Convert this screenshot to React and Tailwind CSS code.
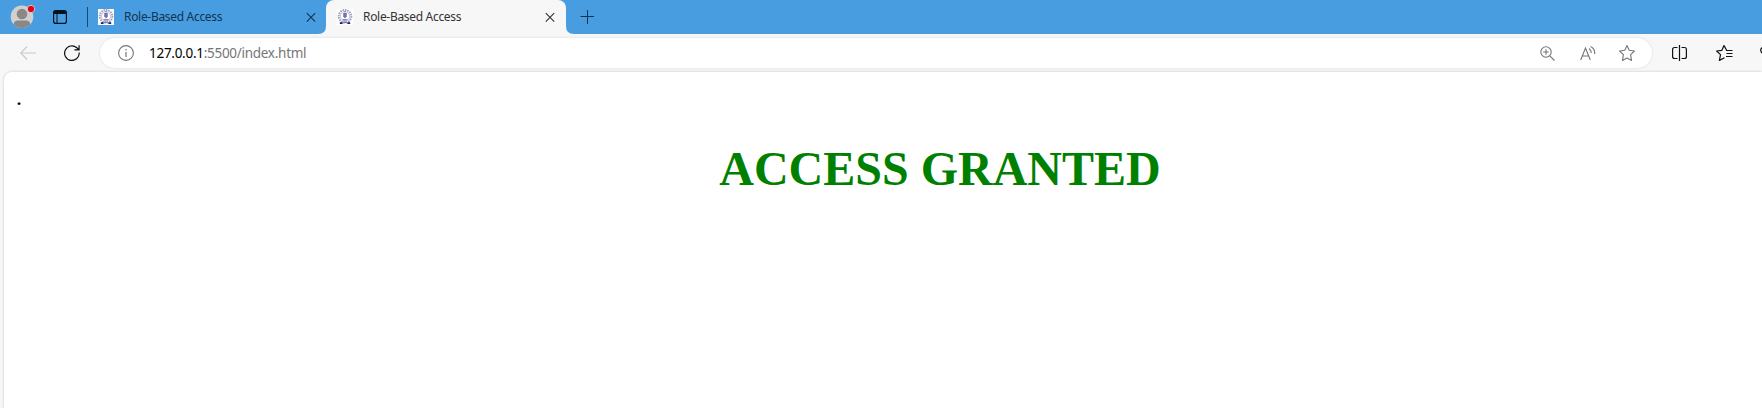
function Crest() {
  return (
    <svg width="16" height="16" viewBox="0 0 16 16" className="shrink-0" fill="none">
      <rect width="16" height="16" fill="#fff" />
      <circle cx="8" cy="7.3" r="6.3" stroke="#7878a8" strokeWidth="2" strokeDasharray="1.6 .8" opacity=".7" />
      <circle cx="8" cy="7.3" r="4.6" stroke="#b4b4cf" strokeWidth=".8" />
      <path d="M6.200 4h3.600v3.500L8 9.500 6.200 7.500Z" fill="#5c5c99" opacity=".85" />
      <path d="M7 2.800h2M5.500 10.500h5M6 12h4" stroke="#7070a8" strokeWidth=".8" />
      <path d="M2.800 13.300h2.800v1.700H2.800zM10.400 13.300h2.800v1.700h-2.800z" fill="#1c1c72" />
      <path d="M5.500 14q2.500-1.300 5 0" stroke="#8080b0" />
    </svg>
  )
}

function Close({ className }) {
  return (
    <svg width="10" height="10" viewBox="0 0 10 10" fill="none" className={className}>
      <path d="m.8 1.200 8.400 8.400m0-8.400L.8 9.600" stroke="currentColor" strokeWidth="1.100" />
    </svg>
  )
}

function TabStrip() {
  return (
    <header className="flex h-[34px] shrink-0 items-center bg-[#489de1]">
      <svg width="36" height="34" viewBox="0 0 36 34" className="shrink-0">
        <circle cx="22" cy="16.700" r="11.300" fill="#d2d0ce" />
        <circle cx="22" cy="14" r="5.300" fill="#8a8886" />
        <path d="M13.800 24.500c0-3 2.200-4 4-4h8.400c1.800 0 4 1 4 4a11.300 11.300 0 0 1-16.400 0Z" fill="#8a8886" />
        <circle cx="31" cy="9" r="3.700" fill="#e3000f" stroke="#d8e3ec" strokeWidth=".8" />
      </svg>
      <svg width="14" height="14" viewBox="0 0 14 14" className="ml-[17px] shrink-0" fill="none">
        <rect x=".6" y=".6" width="12.800" height="12.800" rx="2.200" stroke="#06131e" strokeWidth="1.200" />
        <path d="M.5 2.500Q.5.500 2.500.500h9q2 0 2 2v1.500H.5Z" fill="#06131e" />
        <path d="M4 4v9.500" stroke="#06131e" />
      </svg>
      <div className="ml-5 h-5 w-px shrink-0 bg-[#17496f]" />
      <div className="flex h-full w-[238px] shrink-0 items-center pl-[10px]">
        <Crest />
        <span className="ml-[10px] w-[98px] whitespace-nowrap text-[12px] tracking-[-0.31px] text-[#123450]">Role-Based Access</span>
        <Close className="ml-[84px] text-[#123450]" />
      </div>
      <div className="relative flex h-full w-[240px] shrink-0 items-center rounded-t-[8px] bg-[#f7f7f7] pl-[11px]">
        <svg className="absolute -left-2 bottom-0" width="8" height="8"><path d="M8 0v8H0Q8 8 8 0Z" fill="#f7f7f7" /></svg>
        <svg className="absolute -right-2 bottom-0" width="8" height="8"><path d="M0 0v8h8Q0 8 0 0Z" fill="#f7f7f7" /></svg>
        <Crest />
        <span className="ml-[10px] w-[98px] whitespace-nowrap text-[12px] tracking-[-0.31px] text-[#333]">Role-Based Access</span>
        <Close className="ml-[84px] text-[#333]" />
      </div>
      <svg width="14" height="14" viewBox="0 0 14 14" className="ml-[14px]" fill="none">
        <path d="M7.500 0v14M.5 6.500h13.500" stroke="#123450" />
      </svg>
    </header>
  )
}

function Toolbar() {
  return (
    <div className="flex h-[38px] shrink-0 items-start overflow-hidden bg-[#f7f7f7] pt-1">
      <div className="flex h-[30px] w-[100px] shrink-0 items-center pl-5">
        <svg width="16" height="14" viewBox="0 0 16 14" fill="none">
          <path d="M7 .5.700 7 7 13.500M.7 7H16" stroke="#c9c9c9" strokeWidth="1.100" />
        </svg>
        <svg width="16" height="16" viewBox="0 0 16 16" fill="none" className="ml-7">
          <path d="M15.200 7.500A7.300 7.300 0 1 1 12.800 2.700L15 4.700M15.100.200v4.700h-4.700" stroke="#111" strokeWidth="1.200" />
        </svg>
      </div>
      <div className="flex h-[30px] w-[1552px] shrink-0 items-center rounded-full bg-white pl-[18px] shadow-[0_0_3px_rgba(0,0,0,0.12)]">
        <svg width="16" height="16" viewBox="0 0 16 16" fill="none">
          <circle cx="8" cy="8" r="7.400" stroke="#767676" strokeWidth="1.100" />
          <path d="M8 7v5M8 4v1.400" stroke="#767676" strokeWidth="1.200" />
        </svg>
        <span className="ml-[15px] w-[1390px] whitespace-nowrap text-[13.500px] tracking-[-0.28px] text-[#767676]">
          <span className="text-black">127.0.0.1</span>:5500/index.html
        </span>
        <svg width="15" height="15" viewBox="0 0 15 15" fill="none" stroke="#767676" strokeWidth="1.100" className="ml-px">
          <circle cx="6" cy="6" r="5.200" /><path d="m9.800 9.800 4.700 4.700M3.200 6h5.600M6 3.200v5.600" />
        </svg>
        <svg width="16" height="15" viewBox="0 0 16 15" fill="none" stroke="#767676" strokeWidth="1.100" className="ml-[25px]">
          <path d="M.7 14 5.500 2l4.800 12M2.400 10h6.200M9 2.500q2.300 1.500 2.300 4.500M10.500.500Q15 2.500 14.700 8" />
        </svg>
        <svg width="16" height="16" viewBox="0 0 16 16" fill="none" stroke="#767676" strokeWidth="1.100" className="ml-[23px]">
          <path d="m8 .6 2.200 4.700 5.200.700-3.800 3.600.9 5.800L8 13.100l-4.500 2.300.9-5.800L.6 6l5.200-.7Z" strokeLinejoin="round" />
        </svg>
      </div>
      <div className="flex h-[30px] shrink-0 items-center pl-5">
        <svg width="15" height="16" viewBox="0 0 15 16" fill="none" stroke="#111" strokeWidth="1.200">
          <path d="M7.500 0v16M5.500 2.500h-3Q.6 2.500.600 4.500v7q0 2 1.900 2h3M9.500 2.500h3q1.900 0 1.900 2v7q0 2-1.900 2h-3" />
        </svg>
        <svg width="17" height="16" viewBox="0 0 17 16" fill="none" stroke="#111" strokeWidth="1.200" className="ml-[29px]">
          <path d="M10.500 5 8 .600 5.900 5.300.600 6l3.900 3.600-1.100 5.800L8.500 12.800M10 5.500h6.500M10.500 8.500h6M10 11.500h6.500" strokeLinejoin="round" />
        </svg>
        <svg width="16" height="16" viewBox="0 0 16 16" fill="none" stroke="#111" strokeWidth="1.200" className="ml-[27px]">
          <path d="M8 14 1.500 7.500C-1 3 4 0 8 4c4-4 9-1 6.500 3.500Z" />
        </svg>
      </div>
    </div>
  )
}

export default function App() {
  return (
    <div className="flex h-[408px] w-[1762px] flex-col overflow-hidden bg-[#f7f7f7] font-['Noto_Sans','Open_Sans',sans-serif]">
      <TabStrip />
      <Toolbar />
      <main className="ml-1 flex-1 rounded-tl-[8px] bg-white px-3 pt-[15px] font-['Liberation_Serif',serif] shadow-[0_0_3px_rgba(0,0,0,0.2)]">
        <p className="text-[24px] leading-[20px] text-black">.</p>
        <h1 className="mt-[35px] w-[1848px] text-center text-[48px] font-bold leading-[54px] text-[#008000]">ACCESS GRANTED</h1>
      </main>
    </div>
  )
}
